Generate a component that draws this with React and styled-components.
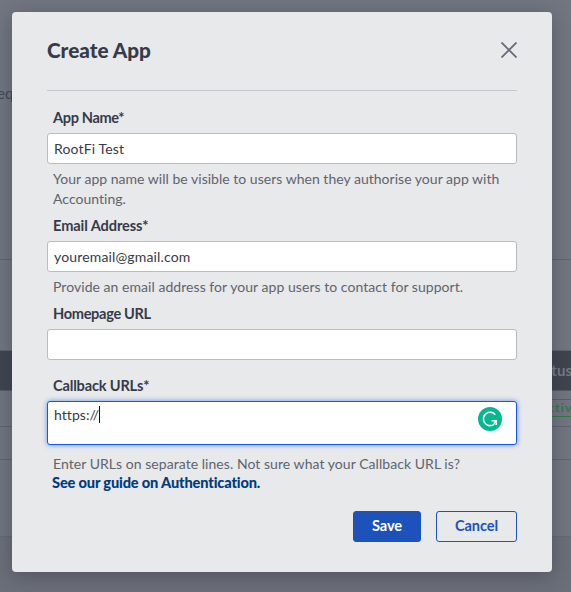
import React from "react";
import styled, { createGlobalStyle } from "styled-components";

const GlobalStyle = createGlobalStyle`
  *, *::before, *::after { box-sizing: border-box; }
  body { margin: 0; overflow: hidden; }
`;

const Screen = styled.div`
  position: relative;
  width: 571px;
  height: 592px;
  overflow: hidden;
  font-family: Lato, "Liberation Sans", sans-serif;
  font-size: 14px;
  color: #363b49;
  background: #6b6f79;
`;

/* Dimmed page that sits behind the dialog */
const Page = styled.div`
  display: flex;
  flex-direction: column;
`;

const PageBand = styled.div`
  display: flex;
  justify-content: ${(p) => p.$align || "flex-start"};
  align-items: ${(p) => p.$items || "center"};
  height: ${(p) => p.$height}px;
  background: ${(p) => p.$bg || "#717680"};
  border-bottom: 1px solid ${(p) => p.$line || "#5f6470"};
`;

const PageText = styled.span`
  margin-top: 84px;
  margin-left: -3px;
  font-size: 15px;
  line-height: 18px;
  color: #434856;
`;

const ColumnTitle = styled.span`
  margin-right: -1px;
  padding-bottom: 2px;
  font-size: 15px;
  font-weight: 700;
  white-space: nowrap;
  color: #777b85;
`;

const StatusTag = styled.span`
  height: 18px;
  margin-right: -13px;
  margin-bottom: 2px;
  padding: 0 3px;
  border: 1px solid #35754d;
  font-size: 12px;
  line-height: 16px;
  font-weight: 700;
  letter-spacing: 1.2px;
  color: #35754d;
`;

const Overlay = styled.div`
  position: absolute;
  inset: 0;
  padding: 12px 19px 20px 12px;
`;

const Dialog = styled.section`
  height: 560px;
  padding: 0 35px;
  border-radius: 4px;
  background: #e7e9eb;
  box-shadow: 0 4px 20px rgba(40, 46, 58, 0.4);
`;

const Header = styled.header`
  display: flex;
  align-items: center;
  justify-content: space-between;
  height: 79px;
  border-bottom: 1px solid #c5c8cb;
`;

const Title = styled.h1`
  margin: 0 0 3px;
  font-size: 20.7px;
  line-height: 24px;
  font-weight: 900;
`;

const CloseButton = styled.button`
  display: flex;
  padding: 0;
  margin-bottom: 2px;
  border: 0;
  background: none;
  color: #666b74;
`;

const Form = styled.form`
  display: flex;
  flex-direction: column;
  padding-top: 17px;
`;

const Field = styled.div`
  display: flex;
  flex-direction: column;
  height: ${(p) => p.$height}px;
`;

const Label = styled.label`
  height: 25px;
  padding-left: 6px;
  font-size: 14.6px;
  line-height: 20px;
  font-weight: 700;
  letter-spacing: ${(p) => p.$spacing}px;
`;

const TextInput = styled.input`
  width: 470px;
  height: 31px;
  padding: 0 6px 1px;
  border: 1px solid #b9bdc2;
  border-radius: 3px;
  background: #fff;
  outline: 0;
  font: inherit;
  letter-spacing: 0.15px;
  color: #363b49;
`;

const FocusedArea = styled.div`
  display: flex;
  align-items: flex-start;
  height: 44px;
  padding: 4px 14px 0 6px;
  border: 1px solid #1557e8;
  border-radius: 3px;
  background: #fff;
  box-shadow: 0 0 5px rgba(21, 87, 232, 0.6);
  line-height: 18px;
  letter-spacing: 0.06px;
`;

const Caret = styled.span`
  width: 1px;
  height: 17px;
  background: #111;
`;

const Badge = styled.svg`
  margin-top: 1px;
  margin-left: auto;
`;

const Hint = styled.p`
  margin: ${(p) => p.$top || 5}px 0 0;
  padding-left: 6px;
  line-height: 20px;
  white-space: pre-line;
  letter-spacing: ${(p) => p.$spacing}px;
  color: #5f646d;
`;

const GuideLink = styled.a`
  margin-left: 5px;
  font-size: 14.6px;
  line-height: 18px;
  font-weight: 900;
  letter-spacing: -0.15px;
  color: #003b7d;
`;

const Actions = styled.footer`
  display: flex;
  justify-content: flex-end;
  gap: 15px;
`;

const Button = styled.button`
  width: ${(p) => p.$width}px;
  height: 31px;
  padding: 0 0 3px;
  border: 1px solid #1d52bb;
  border-radius: 3px;
  background: ${(p) => (p.$primary ? "#1d52bb" : "transparent")};
  color: ${(p) => (p.$primary ? "#fff" : "#1d52bb")};
  font: 700 14.6px Lato, "Liberation Sans", sans-serif;
  letter-spacing: -0.1px;
`;

export default function App() {
  return (
    <Screen>
      <GlobalStyle />
      <Page>
        <PageBand $height={260} $items="flex-start"><PageText>eq</PageText></PageBand>
        <PageBand $height={91} />
        <PageBand $height={40} $bg="#3f444f" $line="#555a66" $align="flex-end">
          <ColumnTitle>Status</ColumnTitle>
        </PageBand>
        <PageBand $height={36} $align="flex-end"><StatusTag>Active</StatusTag></PageBand>
        <PageBand $height={33} />
        <PageBand $height={77} $line="#656a75" />
      </Page>
      <Overlay>
        <Dialog role="dialog" aria-label="Create App">
          <Header>
            <Title>Create App</Title>
            <CloseButton aria-label="Close">
              <svg width="16" height="16" viewBox="0 0 16 16" stroke="currentColor" strokeWidth="1.8">
                <path d="M.5.5l15 15M15.5.5l-15 15" />
              </svg>
            </CloseButton>
          </Header>
          <Form>
            <Field $height={108}>
              <Label $spacing={-0.38}>App Name*</Label>
              <TextInput defaultValue="RootFi Test" />
              <Hint $spacing={0.02}>{"Your app name will be visible to users when they authorise your app with\nAccounting."}</Hint>
            </Field>
            <Field $height={88}>
              <Label $spacing={-0.1}>Email Address*</Label>
              <TextInput defaultValue="youremail@gmail.com" />
              <Hint $spacing={0.045}>Provide an email address for your app users to contact for support.</Hint>
            </Field>
            <Field $height={72}>
              <Label $spacing={-0.33}>Homepage URL</Label>
              <TextInput />
            </Field>
            <Field $height={135}>
              <Label $spacing={-0.18}>Callback URLs*</Label>
              <FocusedArea>
                <span>https://</span>
                <Caret />
                <Badge width="24" height="24" viewBox="0 0 24 24" fill="none">
                  <circle cx="12" cy="12" r="12" fill="#00ba8e" />
                  <path d="M17.3 7.7A6.7 6.7 0 1 0 15.2 17.9L18 14.3" stroke="#fff" strokeWidth="1.6" />
                  <path d="M13.5 13.7H18.2V18" stroke="#fff" strokeWidth="1.6" />
                </Badge>
              </FocusedArea>
              <Hint $top={9} $spacing={0.05}>Enter URLs on separate lines. Not sure what your Callback URL is?</Hint>
              <GuideLink>See our guide on Authentication.</GuideLink>
            </Field>
            <Actions>
              <Button type="button" $primary $width={68}>Save</Button>
              <Button type="button" $width={81}>Cancel</Button>
            </Actions>
          </Form>
        </Dialog>
      </Overlay>
    </Screen>
  );
}
